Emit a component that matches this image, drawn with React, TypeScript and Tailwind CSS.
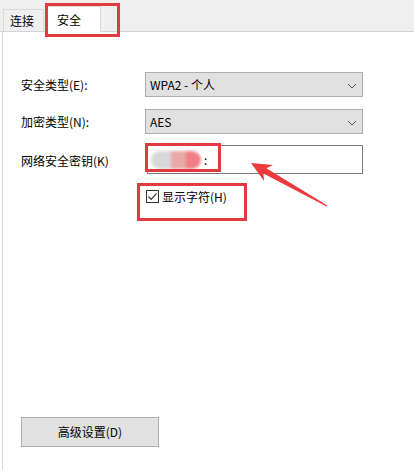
import React from "react";

const Chevron = () => (
  <svg width="10" height="6" viewBox="0 0 10 6" className="absolute right-[5px] top-[10px]">
    <path d="M1 1 L5 5 L9 1" fill="none" stroke="#555" strokeWidth="1" />
  </svg>
);

export default function App() {
  return (
    <div
      className="relative w-[414px] h-[470px] bg-white overflow-hidden text-[12px] text-black"
      style={{ fontFamily: '"Noto Sans CJK SC", "Liberation Sans", sans-serif' }}
    >
      {/* Tab bar */}
      <div className="h-[32px] bg-[#efefef] border-b border-[#d4d4d4] flex items-end pl-[3px]">
        <div className="w-[41px] h-[22px] bg-[#f0f0f0] border border-b-0 border-[#d9d9d9] flex items-center pl-[6px] leading-none">
          连接
        </div>
        <div className="ml-[3px] -mb-px w-[54px] h-[26px] bg-white border border-b-0 border-[#d9d9d9] flex items-center pl-[9px] leading-none">
          安全
        </div>
      </div>

      {/* Panel */}
      <div className="ml-[2px] h-[438px] border-l border-[#dcdcdc] pl-[18px] pr-[51px] flex flex-col">
        <div className="mt-[40px] flex items-center h-[25px]">
          <div className="w-[124px]">安全类型(E):</div>
          <div className="relative flex-1 h-[25px] bg-[#e1e1e1] border border-[#adadad] flex items-center pl-[4px]">
            WPA2 - 个人
            <Chevron />
          </div>
        </div>
        <div className="mt-[12px] flex items-center h-[25px]">
          <div className="w-[124px]">加密类型(N):</div>
          <div className="relative flex-1 h-[25px] bg-[#e1e1e1] border border-[#adadad] flex items-center pl-[4px]">
            AES
            <Chevron />
          </div>
        </div>
        <div className="mt-[11px] flex items-center h-[29px]">
          <div className="w-[126px] pt-[3px]">网络安全密钥(K)</div>
          <div className="relative flex-1 h-[29px] bg-white border border-[#7a7a7a] flex items-center pl-[3px]">
            <div className="flex h-[18px] w-[50px] rounded-full overflow-hidden blur-[1.5px]">
              <div className="w-[20px] bg-[#d8d8d8]" />
              <div className="w-[15px] bg-[#e8a8aa]" />
              <div className="w-[15px] bg-[#f07f82]" />
            </div>
            <span className="ml-[3px] leading-none">:</span>
          </div>
        </div>
        <div className="mt-[16px] ml-[125px] flex items-center h-[13px]">
          <div className="w-[13px] h-[13px] border border-[#333] flex items-center justify-center">
            <svg width="11" height="11" viewBox="0 0 11 11">
              <path d="M1.5 5.5 L4.2 8.3 L9.5 2.3" fill="none" stroke="#333" strokeWidth="1.2" />
            </svg>
          </div>
          <span className="ml-[3px]">显示字符(H)</span>
        </div>
        <div className="mt-auto mb-[23px] w-[138px] h-[30px] bg-[#e1e1e1] border border-[#adadad] flex items-center justify-center">
          高级设置(D)
        </div>
      </div>

      {/* Annotations */}
      <div className="absolute left-[45px] top-[3px] w-[75px] h-[34px] border-[3px] border-[#e23b3f]" />
      <div className="absolute left-[145px] top-[143px] w-[76px] h-[29px] border-[3px] border-[#e23b3f]" />
      <div className="absolute left-[137px] top-[183px] w-[110px] h-[38px] border-[3px] border-[#e23b3f]" />
      <svg className="absolute left-0 top-0" width="414" height="470">
        <polygon
          points="251,163 264,181 263.4,173.5 326.6,206.5 327.4,205.5 266.4,168.3 273,165"
          fill="#ec3a3c"
        />
      </svg>
    </div>
  );
}
